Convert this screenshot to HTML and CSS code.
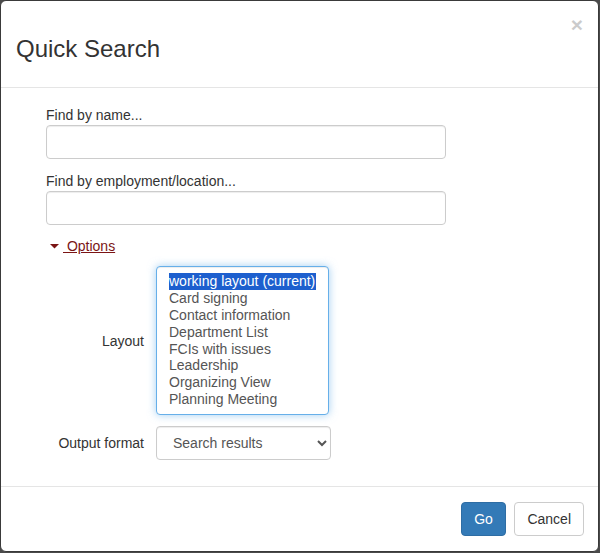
FILE: index.html
```html
<!DOCTYPE html>
<html>
<head>
<meta charset="utf-8">
<title>Quick Search</title>
<link rel="stylesheet" href="styles.css">
</head>
<body>
<div class="modal">
  <div class="modal-header">
    <button class="close" type="button">&times;</button>
    <h3 class="modal-title">Quick Search</h3>
  </div>
  <div class="modal-body">
    <div class="form">
      <div class="form-group">
        <label class="lbl">Find by name...</label>
        <input class="form-control" type="text">
      </div>
      <div class="form-group">
        <label class="lbl">Find by employment/location...</label>
        <input class="form-control" type="text">
      </div>
      <div class="options-toggle">
        <a href="#" class="options-link"><svg class="caret" width="17" height="8" viewBox="0 0 17 8"><polygon points="4,1 13,1 8.5,5.5" fill="currentColor"/></svg> Options</a>
      </div>
      <div class="options-grid">
        <label class="row-label">Layout</label>
        <select class="layout-select" multiple size="8">
          <option selected>working layout (current)</option>
          <option>Card signing</option>
          <option>Contact information</option>
          <option>Department List</option>
          <option>FCIs with issues</option>
          <option>Leadership</option>
          <option>Organizing View</option>
          <option>Planning Meeting</option>
        </select>
        <label class="row-label">Output format</label>
        <select class="format-select">
          <option>Search results</option>
        </select>
      </div>
    </div>
  </div>
  <div class="modal-footer">
    <button class="btn btn-primary" type="button">Go</button>
    <button class="btn btn-default" type="button">Cancel</button>
  </div>
</div>
</body>
</html>
```

FILE: styles.css
```css
html, body {
  margin: 0;
  padding: 0;
}
body {
  background: #4a4a4a;
  width: 600px;
  height: 553px;
  overflow: hidden;
  font-family: "Liberation Sans", Arial, sans-serif;
  font-size: 14px;
  line-height: 20px;
  color: #333;
}
.modal {
  box-sizing: border-box;
  width: 599px;
  height: 552px;
  background: #fff;
  border: 1px solid #3a3a3a;
  border-radius: 6px;
  display: flex;
  flex-direction: column;
  overflow: hidden;
}
.modal-header {
  padding: 15px;
  border-bottom: 1px solid #e5e5e5;
}
.close {
  float: right;
  margin-top: -2px;
  padding: 0;
  border: 0;
  background: transparent;
  font-family: "Liberation Sans", Arial, sans-serif;
  font-size: 21px;
  font-weight: bold;
  line-height: 1;
  color: #000;
  opacity: 0.2;
}
.modal-title {
  margin: 20px 0 10px;
  font-size: 24px;
  font-weight: 500;
  line-height: 1.1;
  color: #333;
}
.modal-body {
  flex: 1;
  padding: 17px 15px 15px;
}
.form {
  margin-left: 30px;
}
.form-group {
  margin-bottom: 12px;
}
.lbl {
  display: block;
  line-height: 20px;
  margin: 0;
}
.form-control {
  box-sizing: border-box;
  display: block;
  width: 400px;
  height: 34px;
  padding: 6px 12px;
  border: 1px solid #ccc;
  border-radius: 4px;
  box-shadow: inset 0 1px 1px rgba(0, 0, 0, 0.075);
  font-family: inherit;
  font-size: 14px;
  color: #555;
  background: #fff;
}
.options-toggle {
  line-height: 20px;
  margin-top: -1px;
}
.options-link {
  color: #7b1515;
  text-decoration: underline;
}
.caret {
  display: inline-block;
  vertical-align: 0px;
}
.options-grid {
  margin-top: 10px;
  display: grid;
  grid-template-columns: 98px auto;
  column-gap: 12px;
  row-gap: 11px;
  justify-content: start;
}
.row-label {
  justify-self: end;
  align-self: center;
  color: #333;
}
.layout-select {
  box-sizing: border-box;
  width: 173px;
  height: 149px;
  padding: 6px 12px;
  border: 1px solid #66afe9;
  border-radius: 4px;
  outline: 0;
  box-shadow: inset 0 1px 1px rgba(0, 0, 0, 0.075), 0 0 8px rgba(102, 175, 233, 0.6);
  font-family: inherit;
  font-size: 14px;
  color: #555;
  background: #fff;
  overflow: hidden;
}
.layout-select option {
  padding: 0;
  min-height: 0;
  height: 16.8px;
  line-height: 16.8px;
}
.layout-select option:checked {
  background: #1d5fce linear-gradient(#1d5fce, #1d5fce);
  color: #fff;
}
.format-select {
  box-sizing: border-box;
  width: 175px;
  height: 34px;
  padding: 6px 12px;
  border: 1px solid #ccc;
  border-radius: 4px;
  box-shadow: inset 0 1px 1px rgba(0, 0, 0, 0.075);
  font-family: inherit;
  font-size: 14px;
  color: #555;
  background: #fff;
}
.modal-footer {
  padding: 15px 14px 15px 15px;
  border-top: 1px solid #e5e5e5;
  display: flex;
  justify-content: flex-end;
  gap: 8px;
}
.btn {
  padding: 6px 12px;
  font-family: inherit;
  font-size: 14px;
  line-height: 20px;
  border: 1px solid transparent;
  border-radius: 4px;
}
.btn-primary {
  padding: 6px 12.5px;
  background: #337ab7;
  border-color: #2e6da4;
  color: #fff;
}
.btn-default {
  background: #fff;
  border-color: #ccc;
  color: #333;
}
```
